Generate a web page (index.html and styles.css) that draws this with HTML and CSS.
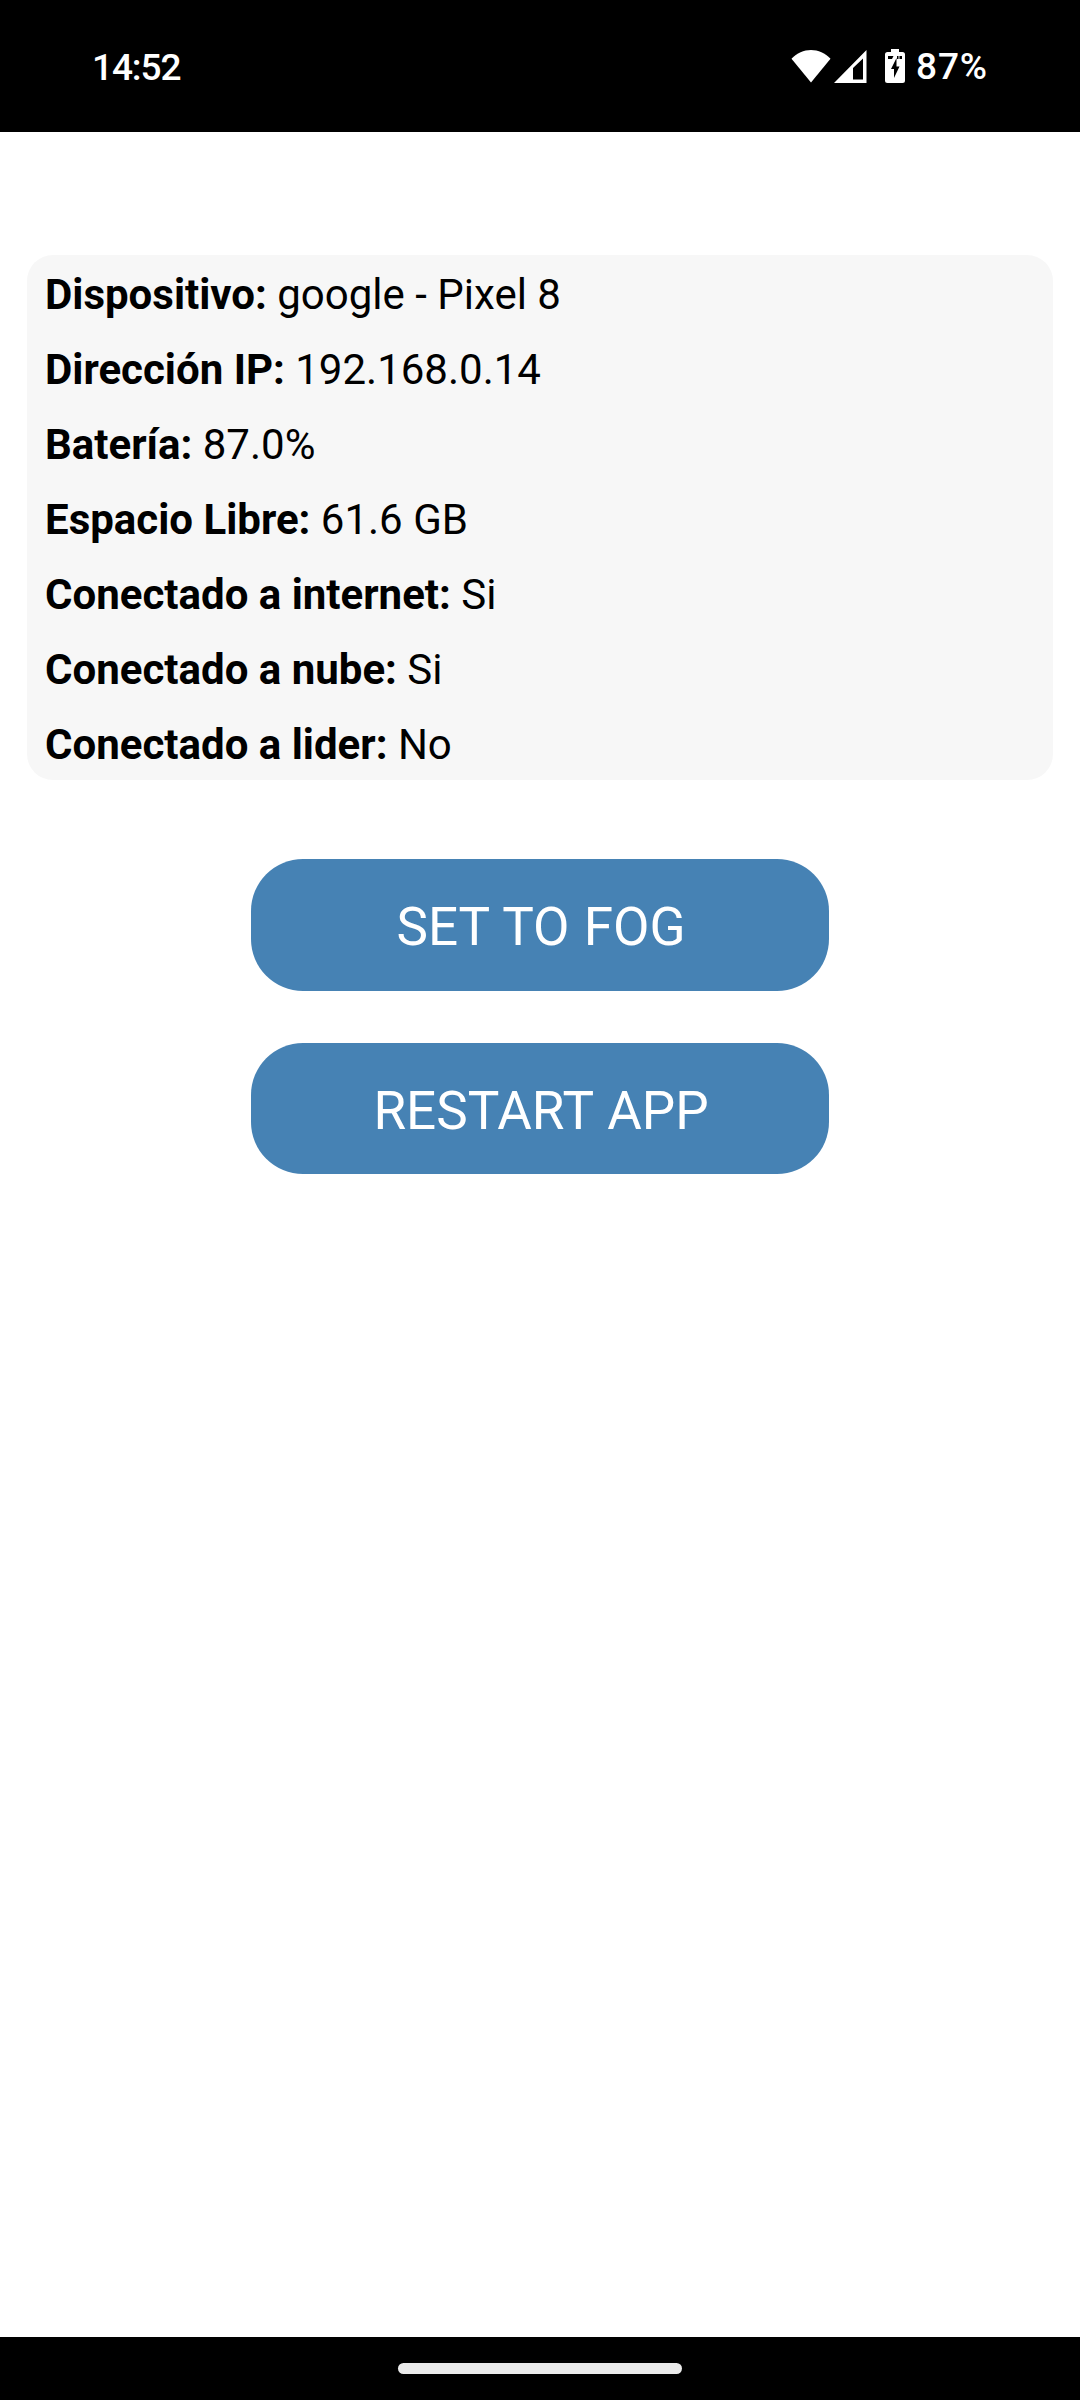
FILE: index.html
```html
<!DOCTYPE html>
<html lang="es">
<head>
<meta charset="utf-8">
<title>Estado del dispositivo</title>
<link rel="stylesheet" href="styles.css">
</head>
<body>
<header class="status-bar">
  <span class="clock">14:52</span>
  <div class="indicators">
    <svg class="wifi" width="40" height="34" viewBox="0 0 40 34"><path d="M.5 9.800C11-1.800 29-1.800 39.500 9.800L20 33.500Z" fill="#fff"/></svg>
    <svg class="signal" width="33" height="34" viewBox="0 0 33 34"><path fill="#fff" fill-rule="evenodd" d="M0 34 32.500 1V34ZM19 19V30.500H29V9.500Z"/></svg>
    <svg class="battery" width="20" height="34" viewBox="0 0 20 34"><path fill="#fff" d="M6 0H14V3H17.500Q20 3 20 5.500V31.500Q20 34 17.500 34H2.500Q0 34 0 31.500V5.500Q0 3 2.500 3H6Z"/><path d="M3 7H8.500L7 10H3ZM12 7H13.500V10H12ZM14.500 7H17V10H14.500ZM11.500 9 6 20H9V29L14.500 17.500H11.500Z"/></svg>
    <span class="level">87%</span>
  </div>
</header>
<main class="content">
  <section class="info">
    <p class="row"><b>Dispositivo:</b> google - Pixel 8</p>
    <p class="row"><b>Dirección IP:</b> 192.168.0.14</p>
    <p class="row"><b>Batería:</b> 87.0%</p>
    <p class="row"><b>Espacio Libre:</b> 61.6 GB</p>
    <p class="row"><b>Conectado a internet:</b> Si</p>
    <p class="row"><b>Conectado a nube:</b> Si</p>
    <p class="row"><b>Conectado a lider:</b> No</p>
  </section>
  <div class="actions">
    <button class="action">SET TO FOG</button>
    <button class="action action-restart">RESTART APP</button>
  </div>
</main>
<footer class="nav-bar"><div class="handle"></div></footer>
</body>
</html>
```
FILE: styles.css
```css
* { box-sizing: border-box; }
body {
  margin: 0;
  height: 2400px;
  display: flex;
  flex-direction: column;
  background: #fff;
  color: #000;
  font-family: Roboto, "Liberation Sans", sans-serif;
}
.status-bar {
  height: 132px;
  padding: 0 92px 0 92px;
  display: flex;
  justify-content: space-between;
  align-items: flex-start;
  background: #000;
  color: #fff;
  font-size: 37px;
  font-weight: 500;
  line-height: 44px;
}
.clock { margin-top: 46px; letter-spacing: -1.1px; }
.indicators { display: flex; margin-top: 49px; }
.signal { margin-left: 3px; }
.battery { margin-left: 18px; }
.level { margin: -4px 0 0 11px; letter-spacing: 0.9px; }
.content {
  flex: 1;
  padding: 123px 27px 0;
}
.info {
  border-radius: 26px;
  background: #f7f7f7;
  padding-left: 18px;
}
.row {
  margin: 0;
  height: 75px;
  padding-top: 15px;
  font-size: 42px;
  line-height: 50px;
}
.actions {
  display: flex;
  flex-direction: column;
  align-items: center;
  gap: 52px;
  margin-top: 79px;
}
.action {
  width: 578px;
  height: 132px;
  padding: 3px 0 0 2px;
  border: 0;
  border-radius: 52px;
  background: #4682b4;
  color: #fff;
  font: 400 53px/62px Roboto, "Liberation Sans", sans-serif;
  word-spacing: 1px;
}
.action-restart { height: 131px; padding-top: 5px; }
.nav-bar {
  height: 63px;
  padding-top: 26px;
  background: #000;
}
.handle {
  width: 284px;
  height: 11px;
  margin: 0 auto;
  border-radius: 6px;
  background: #ebebeb;
}
```
